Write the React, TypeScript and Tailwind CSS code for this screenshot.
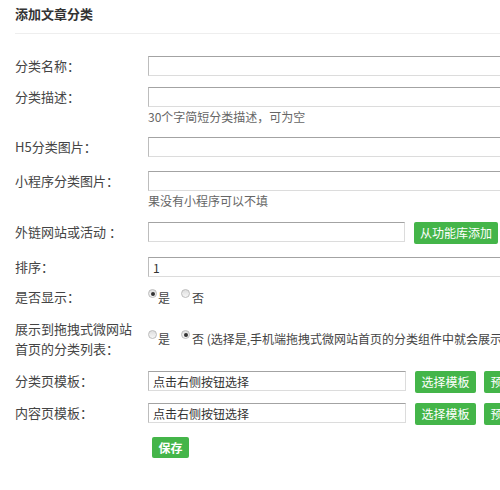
import React from "react";

const inputCls =
  "h-[20px] border border-t-[#a3a3a3] border-l-[#bdbdbd] border-r-[#dcdcdc] border-b-[#dcdcdc] bg-white px-[4px] text-[12px] leading-[18px] text-[#333] outline-none";
const btnCls =
  "h-[22px] shrink-0 rounded-[2px] bg-[#44b549] text-[12px] leading-[22px] text-white text-center";

function Label({ children }: { children: React.ReactNode }) {
  return <div className="w-[133px] shrink-0 text-[13px] leading-[20px] text-[#444]">{children}</div>;
}

function Radio({ checked }: { checked?: boolean }) {
  return (
    <span className="flex h-[9px] w-[9px] shrink-0 items-center justify-center rounded-full border border-[#bcbcbc] bg-gradient-to-b from-[#dedede] to-[#f7f7f7]">
      {checked && <span className="h-[4px] w-[4px] rounded-full bg-[#333]" />}
    </span>
  );
}

function RadioPair({ yes, note }: { yes: boolean; note?: string }) {
  return (
    <div className="flex items-start whitespace-nowrap text-[12px] leading-[20px] text-[#444]">
      <div className="flex items-start pt-[2px]">
        <Radio checked={yes} />
      </div>
      <span className="ml-[1px] pt-[1px]">是</span>
      <div className="ml-[11px] flex items-start pt-[2px]">
        <Radio checked={!yes} />
      </div>
      <span className="ml-[2px] pt-[1px]">否{note}</span>
    </div>
  );
}

export default function App() {
  return (
    <div className="w-[500px] h-[490px] overflow-hidden bg-white font-['Noto_Sans_CJK_SC',sans-serif]">
      <div className="pl-[15px]">
        <div className="border-b border-[#eeeeee] pt-[5px] pb-[10px] text-[13px] font-bold leading-[18px] text-[#333]">
          添加文章分类
        </div>

        <div className="mt-[22px] flex">
          <Label>分类名称：</Label>
          <input className={`${inputCls} w-[380px] shrink-0`} />
        </div>

        <div className="mt-[11px] flex">
          <Label>分类描述：</Label>
          <div className="flex flex-col">
            <input className={`${inputCls} w-[380px] shrink-0`} />
            <div className="text-[12px] leading-[20px] text-[#666]">30个字简短分类描述，可为空</div>
          </div>
        </div>

        <div className="mt-[10px] flex">
          <Label>H5分类图片：</Label>
          <input className={`${inputCls} w-[380px] shrink-0`} />
        </div>

        <div className="mt-[14px] flex">
          <Label>小程序分类图片：</Label>
          <div className="flex flex-col">
            <input className={`${inputCls} w-[380px] shrink-0`} />
            <div className="text-[12px] leading-[20px] text-[#666]">果没有小程序可以不填</div>
          </div>
        </div>

        <div className="mt-[11px] flex">
          <Label>外链网站或活动 ：</Label>
          <input className={`${inputCls} w-[257px] shrink-0`} />
          <button className={`${btnCls} ml-[9px] w-[84px]`}>从功能库添加</button>
        </div>

        <div className="mt-[13px] flex">
          <Label>排序：</Label>
          <input className={`${inputCls} w-[380px] shrink-0`} defaultValue="1" />
        </div>

        <div className="mt-[10px] flex">
          <Label>是否显示：</Label>
          <RadioPair yes />
        </div>

        <div className="mt-[11px] flex">
          <Label>
            展示到拖拽式微网站
            <br />
            首页的分类列表：
          </Label>
          <div className="pt-[9px]">
            <RadioPair yes={false} note=" (选择是,手机端拖拽式微网站首页的分类组件中就会展示" />
          </div>
        </div>

        <div className="mt-[12px] flex">
          <Label>分类页模板：</Label>
          <input className={`${inputCls} w-[258px] shrink-0`} defaultValue="点击右侧按钮选择" />
          <button className={`${btnCls} ml-[9px] w-[61px]`}>选择模板</button>
          <button className={`${btnCls} ml-[8px] w-[61px]`}>预览模板</button>
        </div>

        <div className="mt-[10px] flex">
          <Label>内容页模板：</Label>
          <input className={`${inputCls} w-[258px] shrink-0`} defaultValue="点击右侧按钮选择" />
          <button className={`${btnCls} ml-[9px] w-[61px]`}>选择模板</button>
          <button className={`${btnCls} ml-[8px] w-[61px]`}>预览模板</button>
        </div>

        <div className="mt-[12px] flex pl-[137px]">
          <button className="h-[21px] w-[37px] rounded-[2px] bg-[#44b549] text-[12px] font-bold leading-[21px] text-white">
            保存
          </button>
        </div>
      </div>
    </div>
  );
}
